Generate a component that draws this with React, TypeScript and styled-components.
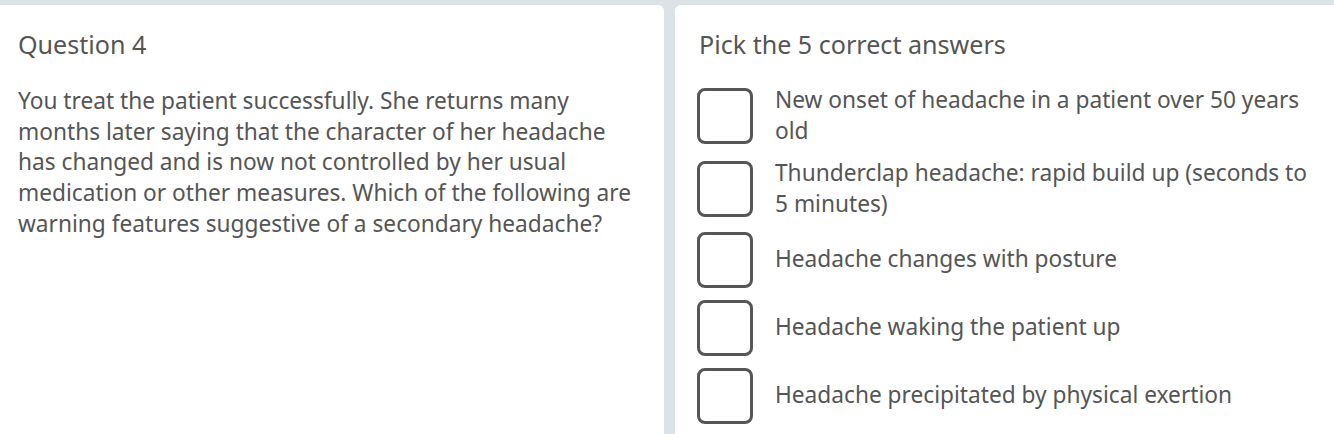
import React from "react";
import styled, { createGlobalStyle } from "styled-components";

const Global = createGlobalStyle`
  html, body { margin: 0; padding: 0; background: #dbe3e6; }
  body { font-family: "Noto Sans", "Open Sans", sans-serif; overflow: hidden; }
  * { box-sizing: border-box; }
`;

const Page = styled.div`
  display: grid;
  grid-template-columns: 670px 670px;
  column-gap: 11px;
  padding-top: 5px;
  margin-left: -6px;
  width: 1351px;
  height: 434px;
  overflow: hidden;
`;

const Panel = styled.section<{ $radius: string }>`
  background: #ffffff;
  border-radius: ${(p) => p.$radius};
  padding: 24px 24px 0 24px;
  min-height: 460px;
  color: #555555;
  font-size: 22.7px;
  line-height: 30.75px;
`;

const Heading = styled.h2`
  margin: 0 0 26px 0;
  font-size: 25.1px;
  font-weight: 400;
  line-height: 30.75px;
  color: #555555;
`;

const Body = styled.p`
  margin: 0;
`;

const Options = styled.div`
  display: flex;
  flex-direction: column;
  gap: 12px;
  margin-top: -1px;
`;

const Row = styled.label`
  display: flex;
  align-items: center;
  gap: 22px;
  min-height: 56px;
`;

const Box = styled.span`
  flex: 0 0 56px;
  width: 56px;
  height: 56px;
  margin-left: -2px;
  border: 3px solid #565656;
  border-radius: 8px;
  background: #fff;
`;

const OptionText = styled.span`
  width: 544px;
`;

const options = [
  "New onset of headache in a patient over 50 years old",
  "Thunderclap headache: rapid build up (seconds to 5 minutes)",
  "Headache changes with posture",
  "Headache waking the patient up",
  "Headache precipitated by physical exertion",
];

export default function App() {
  return (
    <>
      <Global />
      <Page>
        <Panel $radius="0 6px 0 0">
          <Heading>Question 4</Heading>
          <Body>
            You treat the patient successfully. She returns many months later saying that the
            character of her headache has changed and is now not controlled by her usual medication
            or other measures. Which of the following are warning features suggestive of a
            secondary headache?
          </Body>
        </Panel>
        <Panel $radius="6px 0 0 0">
          <Heading>Pick the 5 correct answers</Heading>
          <Options>
            {options.map((o) => (
              <Row key={o}>
                <Box />
                <OptionText>{o}</OptionText>
              </Row>
            ))}
          </Options>
        </Panel>
      </Page>
    </>
  );
}
